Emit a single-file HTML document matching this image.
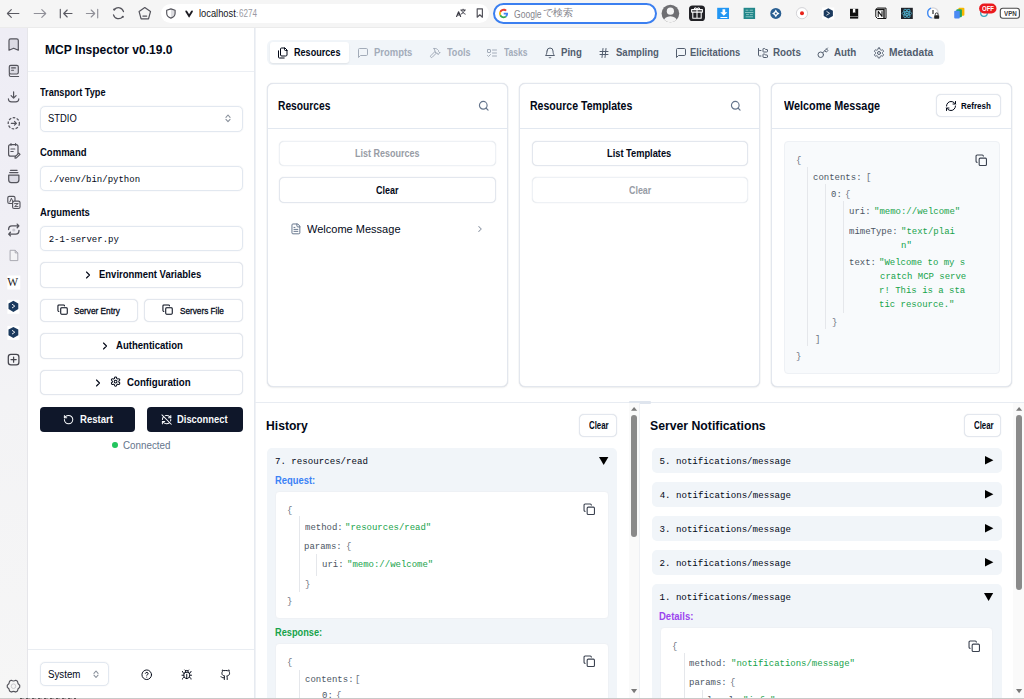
<!DOCTYPE html>
<html><head><meta charset="utf-8"><style>
html,body{margin:0;padding:0;}
body{width:1024px;height:699px;position:relative;overflow:hidden;background:#fff;font-family:"Liberation Sans", sans-serif;color:#020817;}
.r{position:absolute;}
.t{position:absolute;white-space:pre;transform-origin:0 0;}
.s{font-family:"Liberation Sans", sans-serif;}
.m{font-family:"Liberation Mono", monospace;}
.ic{position:absolute;overflow:visible;}
.bl{display:inline-block;width:0;height:0;}
</style></head><body>
<div class="r" style="left:0.00px;top:0.00px;width:1024.00px;height:27.00px;background:#f5f5f5;"></div>
<div class="r" style="left:0.00px;top:27.00px;width:1024.00px;height:1.00px;background:#ebebeb;"></div>
<div class="r" style="left:0.00px;top:28.00px;width:27.00px;height:671.00px;background:linear-gradient(#eeedf5,#f0eff5 30%,#f3f3f5 55%,#f6f6f6);"></div>
<div class="r" style="left:27.00px;top:28.00px;width:1.00px;height:671.00px;background:#e6e6ea;"></div>
<div class="r" style="left:161.20px;top:3.90px;width:328.10px;height:19.10px;background:#fff;border-radius:9.5px;"></div>
<div class="r" style="left:493.20px;top:2.90px;width:164.00px;height:21.00px;border:2px solid #3b7ff0;border-radius:10.5px;box-sizing:border-box;background:#fff;"></div>
<svg class="ic" style="left:0;top:0;width:1024px;height:27px" viewBox="0 0 1024 27"><path d="M18.9 13.5H7.4M11.3 9.6 7.4 13.5l3.9 3.9" stroke="#5a5a62" stroke-width="1.15" fill="none" stroke-linecap="round" stroke-linejoin="round"/><path d="M34.2 13.5H45.7M41.8 9.6l3.9 3.9-3.9 3.9" stroke="#909098" stroke-width="1.15" fill="none" stroke-linecap="round" stroke-linejoin="round"/><path d="M60.3 9.2V17.8M72 13.5H63.7M67.2 10 63.7 13.5l3.5 3.5" stroke="#5a5a62" stroke-width="1.15" fill="none" stroke-linecap="round" stroke-linejoin="round"/><path d="M86.4 13.5H94.7M91.2 10l3.5 3.5-3.5 3.5M97.7 9.2V17.8" stroke="#909098" stroke-width="1.15" fill="none" stroke-linecap="round" stroke-linejoin="round"/><path d="M114.4 9.5A5.3 5.3 0 0 1 123.5 11.6M122.6 16.9A5.3 5.3 0 0 1 113.5 14.8" stroke="#54545c" stroke-width="1.25" fill="none" stroke-linecap="round" stroke-linejoin="round"/><circle cx="114.2" cy="9.6" r="1.1" fill="#54545c"/><circle cx="122.8" cy="16.8" r="1.1" fill="#54545c"/><path d="M144.8 7.6 150.5 11.6 148.5 18.9H141.1L139.1 11.6Z" stroke="#54545c" stroke-width="1.2" fill="none" stroke-linecap="round" stroke-linejoin="round"/><path d="M142.9 16.1H146.7" stroke="#54545c" stroke-width="1.2" fill="none" stroke-linecap="round" stroke-linejoin="round"/><path d="M170.9 8.9 175.1 10.2V13.2C175.1 15.6 173.4 17.3 170.9 18.1Z" fill="#dcdce0"/><path d="M170.9 8.9 175.1 10.2V13.2C175.1 15.6 173.4 17.3 170.9 18.1 168.4 17.3 166.7 15.6 166.7 13.2V10.2Z" stroke="#54545c" stroke-width="1.15" fill="none" stroke-linecap="round" stroke-linejoin="round"/><path d="M186.3 11.4 189.1 15.9 191.9 11.4" stroke="#1c1b22" stroke-width="1.9" fill="none" stroke-linecap="round" stroke-linejoin="miter"/><path d="M456.6 16.5 458.6 11.8 460.6 16.5M457.3 15H460" stroke="#3a3a44" stroke-width="1.15" fill="none" stroke-linecap="round" stroke-linejoin="round"/><path d="M460.8 10H465.4M463.1 9.2V10M461.6 10.4C462.4 12.3 463.6 13.4 465.2 14.1M464.6 10.4C463.8 12.3 462.6 13.4 461 14.1" stroke="#3a3a44" stroke-width="0.95" fill="none" stroke-linecap="round" stroke-linejoin="round"/><path d="M477.2 8.8H482.4V17.2L479.8 14.8 477.2 17.2Z" stroke="#54545c" stroke-width="1.2" fill="none" stroke-linecap="round" stroke-linejoin="round"/><g transform="translate(499,8.8) scale(0.196)"><path fill="#EA4335" d="M24 9.5c3.5 0 6.6 1.2 9.1 3.6l6.8-6.8C35.8 2.4 30.3 0 24 0 14.6 0 6.6 5.4 2.6 13.2l7.9 6.2C12.4 13.6 17.7 9.5 24 9.5z"/><path fill="#4285F4" d="M46.1 24.5c0-1.6-.1-3.1-.4-4.5H24v9h12.4c-.5 2.9-2.2 5.3-4.6 6.9l7.4 5.7c4.3-4 6.9-9.9 6.9-17.1z"/><path fill="#FBBC05" d="M10.5 28.6c-.5-1.4-.8-3-.8-4.6s.3-3.2.8-4.6l-7.9-6.2C.9 16.5 0 20.1 0 24s.9 7.5 2.6 10.8l7.9-6.2z"/><path fill="#34A853" d="M24 48c6.5 0 11.9-2.1 15.9-5.8l-7.4-5.7c-2.1 1.4-4.8 2.3-8.5 2.3-6.3 0-11.6-4.1-13.5-9.8l-7.9 6.2C6.6 42.6 14.6 48 24 48z"/></g><defs><clipPath id="av"><circle cx="670.4" cy="13.5" r="8.8"/></clipPath></defs><circle cx="670.4" cy="13.5" r="8.8" fill="#6f6f72"/><g clip-path="url(#av)"><circle cx="670.4" cy="11.2" r="3.6" fill="#f4f4f4"/><ellipse cx="670.4" cy="21.5" rx="6.8" ry="5.2" fill="#f4f4f4"/></g><rect x="689" y="5.4" width="16" height="15.6" rx="3.6" fill="#222226"/><path d="M691.6 9.6H702.4V12.1H691.6ZM692.8 12.1V18.3H701.2V12.1M697 9.6V18.3M697 9.4C695.8 7.2 693.9 7.6 694.6 9.4M697 9.4C698.2 7.2 700.1 7.6 699.4 9.4" stroke="#ffffff" stroke-width="1.05" fill="none" stroke-linecap="round" stroke-linejoin="round"/><rect x="717.2" y="7.8" width="11.8" height="11.2" fill="#2196f3"/><path d="M722.5 9.3H725.2V12.3H727.4L723.85 15.8 720.3 12.3H722.5Z" fill="#fff"/><rect x="720.4" y="17" width="6.9" height="1" fill="#fff"/><rect x="743.6" y="7.8" width="11.5" height="11.2" fill="#22878a"/><path d="M746 10.2h2M750 10.2h2.5M745.5 12.5h7.5M746.5 14.6h2M750.2 14.6h2.2M746 16.8h6.6" stroke="#9ed2cf" stroke-width="0.8" fill="none" stroke-linecap="round" stroke-linejoin="round"/><circle cx="775.8" cy="13.4" r="5.5" fill="#2a5f92"/><path d="M775.8 9.6 777.3 11.9 779.6 13.4 777.3 14.9 775.8 17.2 774.3 14.9 772 13.4 774.3 11.9Z" fill="#fff"/><circle cx="775.8" cy="13.4" r="1" fill="#2a5f92"/><circle cx="802" cy="13.2" r="5.6" fill="#fff" stroke="#c9c9ce" stroke-width="0.8"/><circle cx="802" cy="13.2" r="2" fill="#e8231b"/><rect x="822" y="7.5" width="12.2" height="12" fill="#fff"/><path d="M828.3 8.3 832.9 10.8V15.9L828.3 18.5 823.7 15.9V10.8Z" fill="#1b3a5e"/><path d="M826.8 11.5 829.6 13.3 826.8 15.1" stroke="#fff" stroke-width="0.8" fill="none" stroke-linecap="round" stroke-linejoin="round"/><path d="M850 8.8H858.2V18.6H850Z" fill="#111"/><path d="M852.9 8.8H855.3V13.1L854.1 12.2 852.9 13.1Z" fill="#fff"/><rect x="850" y="16.1" width="8.2" height="0.8" fill="#9a9a9a"/><path d="M875.8 9.5 877.6 8 886 8.1V18.5H877.5L875.8 16.8Z" fill="#fff" stroke="#111" stroke-width="1"/><path d="M875.8 9.5H884V18.4" stroke="#111" stroke-width="1.4" fill="none"/><path d="M878.2 16.4V11.4L882 16.4V11.4" stroke="#111" stroke-width="1.05" fill="none" stroke-linecap="round" stroke-linejoin="round"/><rect x="901" y="7.8" width="11.8" height="11.2" fill="#20232a"/><g transform="translate(906.9,13.4)" fill="none" stroke="#56c8e8" stroke-width="0.7"><ellipse rx="4.8" ry="1.9"/><ellipse rx="4.8" ry="1.9" transform="rotate(60)"/><ellipse rx="4.8" ry="1.9" transform="rotate(120)"/></g><circle cx="906.9" cy="13.4" r="0.9" fill="#56c8e8"/><circle cx="933" cy="13" r="5.2" fill="#fff" stroke="#d4d4d8" stroke-width="1.3"/><path d="M931 8.2A5 5 0 0 0 931.6 17.8" stroke="#3d8af7" stroke-width="1.3" fill="none"/><rect x="932.4" y="10" width="1.2" height="4" fill="#333"/><rect x="934.2" y="15.2" width="5" height="3.5" rx="0.6" fill="#222"/><path d="M935.3 15.3V14.3A1.4 1.4 0 0 1 938.1 14.3V15.3" stroke="#222" stroke-width="0.9" fill="none"/><rect x="958.4" y="7.8" width="6" height="7.9" rx="1" fill="#f6b800"/><rect x="956.3" y="9.3" width="5.6" height="7.9" rx="1" fill="#1ea362"/><rect x="954.2" y="10.7" width="5.6" height="7.9" rx="1" fill="#4a8af4"/><circle cx="984" cy="13" r="3.3" fill="none" stroke="#3aa6bd" stroke-width="1.3"/><rect x="979.1" y="3.5" width="17.4" height="10" rx="5" fill="#ea1a1f"/><rect x="1000.3" y="8.3" width="19.1" height="10" rx="2.5" fill="#fff" stroke="#4a4a4a" stroke-width="1.1"/></svg>
<div class="t s" style="left:198.60px;top:8.90px;font-size:10.27px;line-height:10.27px;color:#15141a;transform:scaleX(0.9063);">localhost</div>
<div class="t s" style="left:235.82px;top:8.90px;font-size:9.9px;line-height:9.9px;color:#9a9aa2;">:</div>
<div class="t s" style="left:238.50px;top:8.90px;font-size:10.16px;line-height:10.16px;color:#9a9aa2;transform:scaleX(0.7962);">6274</div>
<div class="t s" style="left:513.52px;top:8.51px;font-size:10.58px;line-height:10.58px;color:#84848c;transform:scaleX(0.8094);">Google</div>
<div class="t" style="left:543px;top:8.2px;font-size:9.6px;line-height:10px;color:#84848c;">で検索</div>
<div class="t s" style="left:981.84px;top:5.11px;font-size:7.97px;line-height:7.97px;font-weight:700;color:#ffffff;transform:scaleX(0.7528);">OFF</div>
<div class="t s" style="left:1003.68px;top:9.81px;font-size:7.02px;line-height:7.02px;font-weight:700;color:#3a3a3a;transform:scaleX(0.8838);">VPN</div>
<svg class="ic" style="left:0;top:0;width:28px;height:699px" viewBox="0 0 28 699"><path d="M9 40.5C9 39.5 9.8 38.8 10.7 38.8H16.6C17.5 38.8 18.3 39.5 18.3 40.5V50.2L13.65 48.3 9 50.2Z" fill="#dcdbe4" stroke="#54545c" stroke-width="1.2" fill="none" stroke-linecap="round" stroke-linejoin="round"/><rect x="9.3" y="65.4" width="9" height="8.6" rx="1.4" fill="#dcdbe4" stroke="#54545c" stroke-width="1.15"/><path d="M9.3 73.6V75.1C9.3 75.9 9.9 76.5 10.7 76.5H18.6M11.6 67.9H15.4M11.6 70.2H13.5" stroke="#54545c" stroke-width="1.1" fill="none" stroke-linecap="round" stroke-linejoin="round"/><path d="M13.6 91.8V98.1M11.1 95.7 13.6 98.2 16.1 95.7M8.4 98.8C8.4 100.6 9.8 101.9 11.6 101.9H15.6C17.4 101.9 18.8 100.6 18.8 98.8" stroke="#54545c" stroke-width="1.2" fill="none" stroke-linecap="round" stroke-linejoin="round"/><circle cx="13.8" cy="123.3" r="5.6" stroke="#54545c" stroke-width="1.25" stroke-dasharray="2.6 1.5" fill="none"/><path d="M11.3 123.3H16.3M14.5 121.4 16.4 123.3 14.5 125.2" stroke="#54545c" stroke-width="1.2" fill="none" stroke-linecap="round" stroke-linejoin="round"/><rect x="8.6" y="144.6" width="9.4" height="11.6" rx="2" stroke="#54545c" stroke-width="1.2" fill="none"/><path d="M11 143.5V145.3M15.6 143.5V145.3M10.9 149H14.8M10.9 151.5H13.2M15.2 156.7 18.8 153.1 20 154.3 16.4 157.9 15 158.1Z" stroke="#54545c" stroke-width="1.15" fill="#f0eff5" stroke-linecap="round" stroke-linejoin="round"/><path d="M9.7 172.5H17.9M8.7 175.2H18.9V180.1C18.9 181.5 17.8 182.6 16.4 182.6H11.2C9.8 182.6 8.7 181.5 8.7 180.1Z" fill="#dcdbe4" stroke="#54545c" stroke-width="1.25" fill="none" stroke-linecap="round" stroke-linejoin="round"/><path d="M10.5 170.3H17.1" stroke="#54545c" stroke-width="1.2" fill="none" stroke-linecap="round" stroke-linejoin="round"/><rect x="7.8" y="196.3" width="7.2" height="7.2" rx="1.5" stroke="#54545c" stroke-width="1.15" fill="none"/><rect x="12.6" y="201.1" width="7.4" height="7.4" rx="1.5" stroke="#54545c" stroke-width="1.15" fill="#f0eff5"/><path d="M9.8 202 11.4 198.2 13 202M14.6 203.6H18M18 203.6 14.6 206.6H18" stroke="#54545c" stroke-width="1" fill="none" stroke-linecap="round" stroke-linejoin="round"/><path d="M8.6 229.5C8.6 227.4 10 225.9 12 225.9H18.8M17.2 224.1 18.9 225.9 17.2 227.7M19 230.5C19 232.6 17.6 234.1 15.6 234.1H8.8M10.4 235.9 8.7 234.1 10.4 232.3" stroke="#54545c" stroke-width="1.35" fill="none" stroke-linecap="round" stroke-linejoin="round"/><circle cx="13.8" cy="230" r="1.6" fill="#c9c8d0"/><rect x="7.3" y="275.5" width="13" height="14" fill="#fff"/><rect x="7.4" y="299.8" width="12" height="14" fill="#fff"/><rect x="7.4" y="325.9" width="12" height="14" fill="#fff"/><path d="M10.1 250.3H15.2L17.8 252.9V260.6H10.1Z" fill="#f4f4f6" stroke="#a2a2aa" stroke-width="0.9" stroke-linejoin="round"/><path d="M15.2 250.3V252.9H17.8" stroke="#a2a2aa" stroke-width="0.9" fill="none"/><path d="M8.5 303.5 13.4 300.8 18.3 303.5V309.1L13.4 311.9 8.5 309.1Z" fill="#1b3a5e"/><path d="M12 304.2 14.8 306.1 12 308" stroke="#fff" stroke-width="0.9" fill="none"/><path d="M8.5 329.6 13.4 326.9 18.3 329.6V335.2L13.4 338 8.5 335.2Z" fill="#1b3a5e"/><path d="M12 330.3 14.8 332.2 12 334.1" stroke="#fff" stroke-width="0.9" fill="none"/><rect x="8.3" y="354.3" width="10.6" height="10.6" rx="2.6" stroke="#45454d" stroke-width="1.25" fill="none"/><path d="M13.6 357V362.2M11 359.6H16.2" stroke="#45454d" stroke-width="1.25" fill="none" stroke-linecap="round" stroke-linejoin="round"/><path d="M19.72 685.21L19.72 687.19Q17.48 688.50 17.46 691.10L15.76 692.08Q13.50 690.80 11.24 692.08L9.54 691.10Q9.52 688.50 7.28 687.19L7.28 685.21Q9.52 683.90 9.54 681.30L11.24 680.32Q13.50 681.60 15.76 680.32L17.46 681.30Q17.48 683.90 19.72 685.21Z" stroke="#54545c" stroke-width="1.15" fill="none" stroke-linejoin="round"/><circle cx="13.5" cy="686.2" r="2.3" stroke="#c4c4c8" stroke-width="0.9" fill="none"/></svg>
<div class="t" style="left:7.3px;top:275.5px;font-size:11.5px;line-height:12px;color:#222;font-family:'Liberation Serif', serif;">W</div>
<div class="r" style="left:28.00px;top:28.00px;width:226.00px;height:670.00px;background:#fff;"></div>
<div class="r" style="left:254.00px;top:28.00px;width:1.00px;height:670.00px;background:#e6eaf0;"></div>
<div class="r" style="left:255.00px;top:28.00px;width:1.00px;height:670.00px;background:#f0f2f6;"></div>
<div class="r" style="left:28.00px;top:71.00px;width:226.00px;height:1.00px;background:#eceff4;"></div>
<div class="t s" style="left:45.40px;top:43.41px;font-size:13.48px;line-height:13.48px;font-weight:700;transform:scaleX(0.8934);">MCP Inspector v0.19.0</div>
<div class="t s" style="left:40.48px;top:87.80px;font-size:10.46px;line-height:10.46px;font-weight:700;transform:scaleX(0.8765);">Transport Type</div>
<div class="r" style="left:40.00px;top:106.00px;width:203.00px;height:25.50px;border:1px solid #e2e8f0;border-radius:5px;box-sizing:border-box;box-shadow:0 0 1px rgba(100,116,139,.25);"></div>
<div class="t s" style="left:47.64px;top:112.91px;font-size:10.82px;line-height:10.82px;transform:scaleX(0.8695);">STDIO</div>
<svg class="ic" style="left:223.60px;top:112.10px;width:8px;height:12.60px" viewBox="0 0 8 12.60"><path d="M1.95 5.30L4.00 3.00L6.05 5.30M1.95 7.30L4.00 9.60L6.05 7.30" fill="none" stroke="#8a919c" stroke-width="1.1" stroke-linecap="round" stroke-linejoin="round"/></svg>
<div class="t s" style="left:39.84px;top:147.71px;font-size:10.49px;line-height:10.49px;font-weight:700;transform:scaleX(0.9079);">Command</div>
<div class="r" style="left:40.00px;top:165.50px;width:203.00px;height:25.00px;border:1px solid #e2e8f0;border-radius:5px;box-sizing:border-box;box-shadow:0 0 1px rgba(100,116,139,.25);"></div>
<div class="t m" style="left:48.24px;top:176.21px;font-size:9.0px;line-height:9.0px;">./venv/bin/python</div>
<div class="t s" style="left:39.84px;top:207.50px;font-size:10.48px;line-height:10.48px;font-weight:700;transform:scaleX(0.9022);">Arguments</div>
<div class="r" style="left:40.00px;top:225.50px;width:203.00px;height:25.00px;border:1px solid #e2e8f0;border-radius:5px;box-sizing:border-box;box-shadow:0 0 1px rgba(100,116,139,.25);"></div>
<div class="t m" style="left:48.67px;top:235.60px;font-size:9.0px;line-height:9.0px;">2-1-server.py</div>
<div class="r" style="left:40.00px;top:262.00px;width:203.00px;height:25.50px;border:1px solid #e3e7ee;border-radius:5px;box-sizing:border-box;background:#fff;box-shadow:0 0 1px rgba(100,116,139,.3);"></div>
<svg class="ic" style="left:82.20px;top:268.90px;width:12px;height:12px;" viewBox="0 0 24 24" fill="none" stroke="#020817" stroke-width="2.2" stroke-linecap="round" stroke-linejoin="round"><path d="m9 18 6-6-6-6"/></svg>
<div class="t s" style="left:98.60px;top:270.21px;font-size:10.48px;line-height:10.48px;font-weight:700;transform:scaleX(0.9056);">Environment Variables</div>
<div class="r" style="left:40.00px;top:299.30px;width:98.00px;height:22.50px;border:1px solid #e3e7ee;border-radius:5px;box-sizing:border-box;background:#fff;box-shadow:0 0 1px rgba(100,116,139,.3);"></div>
<svg class="ic" style="left:56.90px;top:304.10px;width:11.2px;height:11.2px;" viewBox="0 0 24 24" fill="none" stroke="#020817" stroke-width="2.2" stroke-linecap="round" stroke-linejoin="round"><rect width="14" height="14" x="8" y="8" rx="2" ry="2"/><path d="M4 16c-1.1 0-2-.9-2-2V4c0-1.1.9-2 2-2h10c1.1 0 2 .9 2 2"/></svg>
<div class="t s" style="left:74.20px;top:305.71px;font-size:9.43px;line-height:9.43px;transform:scaleX(0.8762);-webkit-text-stroke:0.3px #020817;">Server Entry</div>
<div class="r" style="left:144.00px;top:299.30px;width:99.00px;height:22.50px;border:1px solid #e3e7ee;border-radius:5px;box-sizing:border-box;background:#fff;box-shadow:0 0 1px rgba(100,116,139,.3);"></div>
<svg class="ic" style="left:161.50px;top:304.10px;width:11.2px;height:11.2px;" viewBox="0 0 24 24" fill="none" stroke="#020817" stroke-width="2.2" stroke-linecap="round" stroke-linejoin="round"><rect width="14" height="14" x="8" y="8" rx="2" ry="2"/><path d="M4 16c-1.1 0-2-.9-2-2V4c0-1.1.9-2 2-2h10c1.1 0 2 .9 2 2"/></svg>
<div class="t s" style="left:180.16px;top:305.71px;font-size:9.41px;line-height:9.41px;transform:scaleX(0.8725);-webkit-text-stroke:0.3px #020817;">Servers File</div>
<div class="r" style="left:40.00px;top:333.00px;width:203.00px;height:25.70px;border:1px solid #e3e7ee;border-radius:5px;box-sizing:border-box;background:#fff;box-shadow:0 0 1px rgba(100,116,139,.3);"></div>
<svg class="ic" style="left:98.80px;top:339.50px;width:12px;height:12px;" viewBox="0 0 24 24" fill="none" stroke="#020817" stroke-width="2.2" stroke-linecap="round" stroke-linejoin="round"><path d="m9 18 6-6-6-6"/></svg>
<div class="t s" style="left:116.20px;top:341.10px;font-size:10.49px;line-height:10.49px;font-weight:700;transform:scaleX(0.9111);">Authentication</div>
<div class="r" style="left:40.00px;top:370.00px;width:203.00px;height:25.00px;border:1px solid #e3e7ee;border-radius:5px;box-sizing:border-box;background:#fff;box-shadow:0 0 1px rgba(100,116,139,.3);"></div>
<svg class="ic" style="left:92.40px;top:376.70px;width:12px;height:12px;" viewBox="0 0 24 24" fill="none" stroke="#020817" stroke-width="2.2" stroke-linecap="round" stroke-linejoin="round"><path d="m9 18 6-6-6-6"/></svg>
<svg class="ic" style="left:110.00px;top:376.00px;width:11.2px;height:11.2px;" viewBox="0 0 24 24" fill="none" stroke="#020817" stroke-width="2.2" stroke-linecap="round" stroke-linejoin="round"><path d="M12.22 2h-.44a2 2 0 0 0-2 2v.18a2 2 0 0 1-1 1.73l-.43.25a2 2 0 0 1-2 0l-.15-.08a2 2 0 0 0-2.73.73l-.22.38a2 2 0 0 0 .73 2.73l.15.1a2 2 0 0 1 1 1.72v.51a2 2 0 0 1-1 1.74l-.15.09a2 2 0 0 0-.73 2.73l.22.38a2 2 0 0 0 2.73.73l.15-.08a2 2 0 0 1 2 0l.43.25a2 2 0 0 1 1 1.73V20a2 2 0 0 0 2 2h.44a2 2 0 0 0 2-2v-.18a2 2 0 0 1 1-1.73l.43-.25a2 2 0 0 1 2 0l.15.08a2 2 0 0 0 2.73-.73l.22-.39a2 2 0 0 0-.73-2.73l-.15-.08a2 2 0 0 1-1-1.74v-.5a2 2 0 0 1 1-1.74l.15-.09a2 2 0 0 0 .73-2.73l-.22-.38a2 2 0 0 0-2.73-.73l-.15.08a2 2 0 0 1-2 0l-.43-.25a2 2 0 0 1-1-1.73V4a2 2 0 0 0-2-2z"/><circle cx="12" cy="12" r="3"/></svg>
<div class="t s" style="left:126.68px;top:377.30px;font-size:10.5px;line-height:10.5px;font-weight:700;transform:scaleX(0.9235);">Configuration</div>
<div class="r" style="left:40.00px;top:406.80px;width:95.40px;height:25.00px;background:#0f172a;border-radius:4px;"></div>
<svg class="ic" style="left:63.00px;top:413.50px;width:11.2px;height:11.2px;" viewBox="0 0 24 24" fill="none" stroke="#f8fafc" stroke-width="2.2" stroke-linecap="round" stroke-linejoin="round"><path d="M3 12a9 9 0 1 0 9-9 9.75 9.75 0 0 0-6.74 2.74L3 8"/><path d="M3 3v5h5"/></svg>
<div class="t s" style="left:79.76px;top:414.50px;font-size:10.46px;line-height:10.46px;font-weight:700;color:#f8fafc;transform:scaleX(0.9127);">Restart</div>
<div class="r" style="left:147.00px;top:406.80px;width:95.60px;height:25.00px;background:#0f172a;border-radius:4px;"></div>
<svg class="ic" style="left:161.00px;top:413.50px;width:11.2px;height:11.2px;" viewBox="0 0 24 24" fill="none" stroke="#f8fafc" stroke-width="2.2" stroke-linecap="round" stroke-linejoin="round"><path d="M21 8L18.74 5.74A9.75 9.75 0 0 0 12 3C11 3 10.030 3.160 9.130 3.470"/><path d="M8 16H3v5"/><path d="M3 12C3 9.510 4 7.260 5.640 5.640"/><path d="m3 16 2.260 2.260A9.750 9.750 0 0 0 12 21c2.490 0 4.740-1 6.360-2.640"/><path d="M21 12c0 1-.160 1.970-.470 2.870"/><path d="M21 3v5h-5"/><path d="M22 22 2 2"/></svg>
<div class="t s" style="left:177.48px;top:414.50px;font-size:10.46px;line-height:10.46px;font-weight:700;color:#f8fafc;transform:scaleX(0.8981);">Disconnect</div>
<div class="r" style="left:112.20px;top:441.80px;width:5.80px;height:5.80px;background:#22c55e;border-radius:50%;"></div>
<div class="t s" style="left:123.00px;top:439.81px;font-size:10.52px;line-height:10.52px;color:#64748b;transform:scaleX(0.9338);">Connected</div>
<div class="r" style="left:28.00px;top:649.00px;width:226.00px;height:1.00px;background:#e9edf2;"></div>
<div class="r" style="left:40.20px;top:661.50px;width:68.60px;height:24.70px;border:1px solid #e2e8f0;border-radius:5px;box-sizing:border-box;box-shadow:0 0 1px rgba(100,116,139,.25);"></div>
<div class="t s" style="left:47.96px;top:670.01px;font-size:10.47px;line-height:10.47px;transform:scaleX(0.9297);">System</div>
<svg class="ic" style="left:91.90px;top:667.90px;width:8px;height:12.50px" viewBox="0 0 8 12.50"><path d="M1.95 5.30L4.00 3.00L6.05 5.30M1.95 7.20L4.00 9.50L6.05 7.20" fill="none" stroke="#8a919c" stroke-width="1.1" stroke-linecap="round" stroke-linejoin="round"/></svg>
<svg class="ic" style="left:140.50px;top:668.50px;width:11.5px;height:11.5px;" viewBox="0 0 24 24" fill="none" stroke="#020817" stroke-width="2" stroke-linecap="round" stroke-linejoin="round"><circle cx="12" cy="12" r="10"/><path d="M9.09 9a3 3 0 0 1 5.83 1c0 2-3 3-3 3"/><path d="M12 17h.01"/></svg>
<svg class="ic" style="left:180.50px;top:668.50px;width:11.5px;height:11.5px;" viewBox="0 0 24 24" fill="none" stroke="#020817" stroke-width="2" stroke-linecap="round" stroke-linejoin="round"><path d="m8 2 1.88 1.88"/><path d="M14.12 3.88 16 2"/><path d="M9 7.13v-1a3.003 3.003 0 1 1 6 0v1"/><path d="M12 20c-3.3 0-6-2.7-6-6v-3a4 4 0 0 1 4-4h4a4 4 0 0 1 4 4v3c0 3.3-2.7 6-6 6"/><path d="M12 20v-9"/><path d="M6.53 9C4.6 8.8 3 7.1 3 5"/><path d="M6 13H2"/><path d="M3 21c0-2.1 1.7-3.9 3.8-4"/><path d="M20.97 5c0 2.1-1.6 3.8-3.5 4"/><path d="M22 13h-4"/><path d="M17.2 17c2.1.1 3.8 1.9 3.8 4"/></svg>
<svg class="ic" style="left:219.50px;top:668.50px;width:11.5px;height:11.5px;" viewBox="0 0 24 24" fill="none" stroke="#020817" stroke-width="2" stroke-linecap="round" stroke-linejoin="round"><path d="M15 22v-4a4.8 4.8 0 0 0-1-3.5c3 0 6-2 6-5.5.08-1.25-.27-2.48-1-3.5.28-1.15.28-2.35 0-3.5 0 0-1 0-3 1.5-2.64-.5-5.36-.5-8 0C6 2 5 2 5 2c-.3 1.15-.3 2.35 0 3.5A5.403 5.403 0 0 0 4 9c0 3.5 3 5.5 6 5.5-.39.49-.68 1.05-.85 1.65-.17.6-.22 1.23-.15 1.85v4"/><path d="M9 18c-4.49 2-5-2-7-2"/></svg>
<div class="r" style="left:267.00px;top:39.60px;width:678.00px;height:25.80px;background:#f1f5f9;border-radius:6px;"></div>
<div class="r" style="left:269.60px;top:41.80px;width:79.00px;height:21.00px;background:#fff;border-radius:3px;box-shadow:0 1px 2px rgba(0,0,0,.08);"></div>
<svg class="ic" style="left:276.50px;top:46.50px;width:12px;height:12px;" viewBox="0 0 24 24" fill="none" stroke="#020817" stroke-width="2" stroke-linecap="round" stroke-linejoin="round"><path d="M20 7h-3a2 2 0 0 1-2-2V2"/><path d="M9 18a2 2 0 0 1-2-2V4a2 2 0 0 1 2-2h7l4 4v10a2 2 0 0 1-2 2Z"/><path d="M3 7.6v12.8A1.6 1.6 0 0 0 4.6 22h9.8"/></svg>
<div class="t s" style="left:294.12px;top:48.22px;font-size:10.08px;line-height:10.08px;font-weight:700;transform:scaleX(0.9008);">Resources</div>
<svg class="ic" style="left:356.50px;top:46.50px;width:12px;height:12px;" viewBox="0 0 24 24" fill="none" stroke="#a3acb9" stroke-width="2" stroke-linecap="round" stroke-linejoin="round"><path d="M21 15a2 2 0 0 1-2 2H7l-4 4V5a2 2 0 0 1 2-2h14a2 2 0 0 1 2 2z"/></svg>
<div class="t s" style="left:373.76px;top:48.22px;font-size:10.08px;line-height:10.08px;font-weight:700;color:#a3acb9;transform:scaleX(0.9376);">Prompts</div>
<svg class="ic" style="left:428.50px;top:46.50px;width:12px;height:12px;" viewBox="0 0 24 24" fill="none" stroke="#a3acb9" stroke-width="2" stroke-linecap="round" stroke-linejoin="round"><path d="m15 12-8.373 8.373a1 1 0 1 1-3-3L12 9"/><path d="m18 15 4-4"/><path d="m21.5 11.5-1.914-1.914A2 2 0 0 1 19 8.172V7l-2.26-2.26a6 6 0 0 0-4.202-1.756L9 2.96l.92.82A6.18 6.18 0 0 1 12 8.4V10l2 2h1.172a2 2 0 0 1 1.414.586L18.5 14.5"/></svg>
<div class="t s" style="left:446.64px;top:48.22px;font-size:10.08px;line-height:10.08px;font-weight:700;color:#a3acb9;transform:scaleX(0.8976);">Tools</div>
<svg class="ic" style="left:486.20px;top:46.50px;width:12px;height:12px;" viewBox="0 0 24 24" fill="none" stroke="#a3acb9" stroke-width="2" stroke-linecap="round" stroke-linejoin="round"><rect x="3" y="5" width="6" height="6" rx="1"/><path d="m3 17 2 2 4-4"/><path d="M13 6h8"/><path d="M13 12h8"/><path d="M13 18h8"/></svg>
<div class="t s" style="left:504.00px;top:48.22px;font-size:10.08px;line-height:10.08px;font-weight:700;color:#a3acb9;transform:scaleX(0.8423);">Tasks</div>
<svg class="ic" style="left:543.80px;top:46.50px;width:12px;height:12px;" viewBox="0 0 24 24" fill="none" stroke="#525d6e" stroke-width="2" stroke-linecap="round" stroke-linejoin="round"><path d="M6 8a6 6 0 0 1 12 0c0 7 3 9 3 9H3s3-2 3-9"/><path d="M10.3 21a1.94 1.94 0 0 0 3.4 0"/></svg>
<div class="t s" style="left:560.60px;top:48.22px;font-size:10.08px;line-height:10.08px;font-weight:700;color:#525d6e;transform:scaleX(0.9542);">Ping</div>
<svg class="ic" style="left:598.30px;top:46.50px;width:12px;height:12px;" viewBox="0 0 24 24" fill="none" stroke="#525d6e" stroke-width="2" stroke-linecap="round" stroke-linejoin="round"><line x1="4" x2="20" y1="9" y2="9"/><line x1="4" x2="20" y1="15" y2="15"/><line x1="10" x2="8" y1="3" y2="21"/><line x1="16" x2="14" y1="3" y2="21"/></svg>
<div class="t s" style="left:615.64px;top:48.22px;font-size:10.08px;line-height:10.08px;font-weight:700;color:#525d6e;transform:scaleX(0.9432);">Sampling</div>
<svg class="ic" style="left:674.60px;top:46.50px;width:12px;height:12px;" viewBox="0 0 24 24" fill="none" stroke="#525d6e" stroke-width="2" stroke-linecap="round" stroke-linejoin="round"><path d="M21 15a2 2 0 0 1-2 2H7l-4 4V5a2 2 0 0 1 2-2h14a2 2 0 0 1 2 2z"/></svg>
<div class="t s" style="left:690.32px;top:48.22px;font-size:10.08px;line-height:10.08px;font-weight:700;color:#525d6e;transform:scaleX(0.9323);">Elicitations</div>
<svg class="ic" style="left:757.30px;top:46.50px;width:12px;height:12px;" viewBox="0 0 24 24" fill="none" stroke="#525d6e" stroke-width="2" stroke-linecap="round" stroke-linejoin="round"><path d="M20 10a1 1 0 0 0 1-1V6a1 1 0 0 0-1-1h-2.5a1 1 0 0 1-.8-.4l-.9-1.2A1 1 0 0 0 15 3h-2a1 1 0 0 0-1 1v5a1 1 0 0 0 1 1Z"/><path d="M20 21a1 1 0 0 0 1-1v-3a1 1 0 0 0-1-1h-2.9a1 1 0 0 1-.88-.55l-.42-.85a1 1 0 0 0-.92-.6H13a1 1 0 0 0-1 1v5a1 1 0 0 0 1 1Z"/><path d="M3 5a2 2 0 0 0 2 2h3"/><path d="M3 3v13a2 2 0 0 0 2 2h3"/></svg>
<div class="t s" style="left:773.44px;top:48.22px;font-size:10.08px;line-height:10.08px;font-weight:700;color:#525d6e;transform:scaleX(0.9760);">Roots</div>
<svg class="ic" style="left:816.60px;top:46.50px;width:12px;height:12px;" viewBox="0 0 24 24" fill="none" stroke="#525d6e" stroke-width="2" stroke-linecap="round" stroke-linejoin="round"><path d="m15.5 7.5 2.3 2.3a1 1 0 0 0 1.4 0l2.1-2.1a1 1 0 0 0 0-1.4L19 4"/><path d="m21 2-9.6 9.6"/><circle cx="7.5" cy="15.5" r="5.5"/></svg>
<div class="t s" style="left:834.20px;top:48.22px;font-size:10.08px;line-height:10.08px;font-weight:700;color:#525d6e;transform:scaleX(0.9744);">Auth</div>
<svg class="ic" style="left:873.00px;top:46.50px;width:12px;height:12px;" viewBox="0 0 24 24" fill="none" stroke="#525d6e" stroke-width="2" stroke-linecap="round" stroke-linejoin="round"><path d="M12.22 2h-.44a2 2 0 0 0-2 2v.18a2 2 0 0 1-1 1.73l-.43.25a2 2 0 0 1-2 0l-.15-.08a2 2 0 0 0-2.73.73l-.22.38a2 2 0 0 0 .73 2.73l.15.1a2 2 0 0 1 1 1.72v.51a2 2 0 0 1-1 1.74l-.15.09a2 2 0 0 0-.73 2.73l.22.38a2 2 0 0 0 2.73.73l.15-.08a2 2 0 0 1 2 0l.43.25a2 2 0 0 1 1 1.73V20a2 2 0 0 0 2 2h.44a2 2 0 0 0 2-2v-.18a2 2 0 0 1 1-1.73l.43-.25a2 2 0 0 1 2 0l.15.08a2 2 0 0 0 2.73-.73l.22-.39a2 2 0 0 0-.73-2.73l-.15-.08a2 2 0 0 1-1-1.74v-.5a2 2 0 0 1 1-1.74l.15-.09a2 2 0 0 0 .73-2.73l-.22-.38a2 2 0 0 0-2.73-.73l-.15.08a2 2 0 0 1-2 0l-.43-.25a2 2 0 0 1-1-1.73V4a2 2 0 0 0-2-2z"/><circle cx="12" cy="12" r="3"/></svg>
<div class="t s" style="left:889.40px;top:48.22px;font-size:10.08px;line-height:10.08px;font-weight:700;color:#525d6e;transform:scaleX(1.0116);">Metadata</div>
<div class="r" style="left:267.00px;top:82.60px;width:241.00px;height:304.00px;border:1px solid #e3e7ee;border-radius:6px;box-sizing:border-box;background:#fff;box-shadow:0 0 1px rgba(100,116,139,.35),0 1px 2px rgba(0,0,0,.05);"></div>
<div class="r" style="left:268.00px;top:128.30px;width:239.00px;height:1.00px;background:#e2e8f0;"></div>
<div class="r" style="left:519.00px;top:82.60px;width:241.00px;height:304.00px;border:1px solid #e3e7ee;border-radius:6px;box-sizing:border-box;background:#fff;box-shadow:0 0 1px rgba(100,116,139,.35),0 1px 2px rgba(0,0,0,.05);"></div>
<div class="r" style="left:520.00px;top:128.30px;width:239.00px;height:1.00px;background:#e2e8f0;"></div>
<div class="r" style="left:771.00px;top:82.60px;width:241.00px;height:304.00px;border:1px solid #e3e7ee;border-radius:6px;box-sizing:border-box;background:#fff;box-shadow:0 0 1px rgba(100,116,139,.35),0 1px 2px rgba(0,0,0,.05);"></div>
<div class="r" style="left:772.00px;top:128.30px;width:239.00px;height:1.00px;background:#e2e8f0;"></div>
<div class="t s" style="left:278.28px;top:100.11px;font-size:12.05px;line-height:12.05px;font-weight:700;transform:scaleX(0.8508);">Resources</div>
<svg class="ic" style="left:478.30px;top:100.20px;width:11.5px;height:11.5px;" viewBox="0 0 24 24" fill="none" stroke="#64748b" stroke-width="2.4" stroke-linecap="round" stroke-linejoin="round"><circle cx="11" cy="11" r="8"/><path d="m21 21-4.3-4.3"/></svg>
<div class="r" style="left:279.30px;top:140.50px;width:217.00px;height:25.00px;border:1px solid #e3e7ee;border-radius:5px;box-sizing:border-box;background:#fff;box-shadow:0 0 1px rgba(100,116,139,.3);border-color:#eef1f5;"></div>
<div class="t s" style="left:355.40px;top:147.91px;font-size:10.71px;line-height:10.71px;font-weight:700;color:#979ca5;transform:scaleX(0.8390);">List Resources</div>
<div class="r" style="left:279.30px;top:177.30px;width:217.00px;height:25.50px;border:1px solid #e3e7ee;border-radius:5px;box-sizing:border-box;background:#fff;box-shadow:0 0 1px rgba(100,116,139,.3);"></div>
<div class="t s" style="left:376.32px;top:184.81px;font-size:10.73px;line-height:10.73px;font-weight:700;transform:scaleX(0.8376);">Clear</div>
<svg class="ic" style="left:289.90px;top:222.50px;width:11.8px;height:11.8px;" viewBox="0 0 24 24" fill="none" stroke="#64748b" stroke-width="2" stroke-linecap="round" stroke-linejoin="round"><path d="M15 2H6a2 2 0 0 0-2 2v16a2 2 0 0 0 2 2h12a2 2 0 0 0 2-2V7Z"/><path d="M14 2v4a2 2 0 0 0 2 2h4"/><path d="M10 9H8"/><path d="M16 13H8"/><path d="M16 17H8"/></svg>
<div class="t s" style="left:307.20px;top:222.81px;font-size:11.77px;line-height:11.77px;transform:scaleX(0.9367);">Welcome Message</div>
<svg class="ic" style="left:474.50px;top:223.50px;width:10px;height:10px;" viewBox="0 0 24 24" fill="none" stroke="#8a94a3" stroke-width="2.5" stroke-linecap="round" stroke-linejoin="round"><path d="m9 18 6-6-6-6"/></svg>
<div class="t s" style="left:530.48px;top:100.01px;font-size:12.1px;line-height:12.1px;font-weight:700;transform:scaleX(0.8718);">Resource Templates</div>
<svg class="ic" style="left:730.30px;top:100.20px;width:11.5px;height:11.5px;" viewBox="0 0 24 24" fill="none" stroke="#64748b" stroke-width="2.4" stroke-linecap="round" stroke-linejoin="round"><circle cx="11" cy="11" r="8"/><path d="m21 21-4.3-4.3"/></svg>
<div class="r" style="left:531.70px;top:140.50px;width:216.30px;height:25.00px;border:1px solid #e3e7ee;border-radius:5px;box-sizing:border-box;background:#fff;box-shadow:0 0 1px rgba(100,116,139,.3);"></div>
<div class="t s" style="left:607.44px;top:147.81px;font-size:10.74px;line-height:10.74px;font-weight:700;transform:scaleX(0.8636);">List Templates</div>
<div class="r" style="left:531.70px;top:177.30px;width:216.30px;height:25.50px;border:1px solid #e3e7ee;border-radius:5px;box-sizing:border-box;background:#fff;box-shadow:0 0 1px rgba(100,116,139,.3);border-color:#eef1f5;"></div>
<div class="t s" style="left:628.84px;top:184.71px;font-size:10.71px;line-height:10.71px;font-weight:700;color:#979ca5;transform:scaleX(0.8300);">Clear</div>
<div class="t s" style="left:784.16px;top:100.01px;font-size:12.13px;line-height:12.13px;font-weight:700;transform:scaleX(0.8923);">Welcome Message</div>
<div class="r" style="left:936.00px;top:94.30px;width:65.00px;height:22.30px;border:1px solid #e3e7ee;border-radius:5px;box-sizing:border-box;background:#fff;box-shadow:0 0 1px rgba(100,116,139,.3);"></div>
<svg class="ic" style="left:944.60px;top:99.50px;width:12px;height:12px;" viewBox="0 0 24 24" fill="none" stroke="#020817" stroke-width="2" stroke-linecap="round" stroke-linejoin="round"><path d="M3 12a9 9 0 0 1 9-9 9.75 9.75 0 0 1 6.74 2.74L21 8"/><path d="M21 3v5h-5"/><path d="M21 12a9 9 0 0 1-9 9 9.75 9.75 0 0 1-6.74-2.74L3 16"/><path d="M8 16H3v5"/></svg>
<div class="t s" style="left:961.48px;top:101.10px;font-size:9.83px;line-height:9.83px;font-weight:700;transform:scaleX(0.8151);">Refresh</div>
<div class="r" style="left:783.60px;top:140.80px;width:216.40px;height:233.00px;background:#f8fafc;border:1px solid #eef1f5;border-radius:4px;box-sizing:border-box;"></div>
<svg class="ic" style="left:975.00px;top:153.50px;width:12.5px;height:12.5px;" viewBox="0 0 24 24" fill="none" stroke="#3b4250" stroke-width="2.1" stroke-linecap="round" stroke-linejoin="round"><rect width="14" height="14" x="8" y="8" rx="2" ry="2"/><path d="M4 16c-1.1 0-2-.9-2-2V4c0-1.1.9-2 2-2h10c1.1 0 2 .9 2 2"/></svg>
<div class="t m" style="left:795.81px;top:155.61px;font-size:9.36px;line-height:9.36px;color:#6b7280;transform:scaleX(0.9615);">{</div>
<div class="t m" style="left:813.22px;top:172.81px;font-size:9.36px;line-height:9.36px;color:#4b5563;transform:scaleX(0.9615);">contents:</div>
<div class="t m" style="left:865.70px;top:172.81px;font-size:9.36px;line-height:9.36px;color:#6b7280;transform:scaleX(0.9615);">[</div>
<div class="t m" style="left:830.66px;top:190.00px;font-size:9.36px;line-height:9.36px;color:#4b5563;transform:scaleX(0.9615);">0:</div>
<div class="t m" style="left:844.91px;top:190.00px;font-size:9.36px;line-height:9.36px;color:#6b7280;transform:scaleX(0.9615);">{</div>
<div class="t m" style="left:849.09px;top:206.81px;font-size:9.36px;line-height:9.36px;color:#4b5563;transform:scaleX(0.9615);">uri:</div>
<div class="t m" style="left:874.39px;top:206.81px;font-size:9.36px;line-height:9.36px;color:#16a34a;transform:scaleX(0.9615);">"memo://welcome"</div>
<div class="t m" style="left:848.75px;top:226.61px;font-size:9.36px;line-height:9.36px;color:#4b5563;transform:scaleX(0.9615);">mimeType:</div>
<div class="t m" style="left:900.59px;top:226.61px;font-size:9.36px;line-height:9.36px;color:#16a34a;transform:scaleX(0.9615);">"text/plai</div>
<div class="t m" style="left:901.04px;top:240.81px;font-size:9.36px;line-height:9.36px;color:#16a34a;transform:scaleX(0.9615);">n"</div>
<div class="t m" style="left:849.09px;top:257.61px;font-size:9.36px;line-height:9.36px;color:#4b5563;transform:scaleX(0.9615);">text:</div>
<div class="t m" style="left:878.89px;top:257.61px;font-size:9.36px;line-height:9.36px;color:#16a34a;transform:scaleX(0.9615);">"Welcome to my s</div>
<div class="t m" style="left:879.52px;top:271.81px;font-size:9.36px;line-height:9.36px;color:#16a34a;transform:scaleX(0.9615);">cratch MCP serve</div>
<div class="t m" style="left:879.02px;top:286.00px;font-size:9.36px;line-height:9.36px;color:#16a34a;transform:scaleX(0.9615);">r! This is a sta</div>
<div class="t m" style="left:879.29px;top:300.22px;font-size:9.36px;line-height:9.36px;color:#16a34a;transform:scaleX(0.9615);">tic resource."</div>
<div class="t m" style="left:832.28px;top:317.71px;font-size:9.36px;line-height:9.36px;color:#6b7280;transform:scaleX(0.9615);">}</div>
<div class="t m" style="left:814.63px;top:334.51px;font-size:9.36px;line-height:9.36px;color:#6b7280;transform:scaleX(0.9615);">]</div>
<div class="t m" style="left:796.08px;top:351.72px;font-size:9.36px;line-height:9.36px;color:#6b7280;transform:scaleX(0.9615);">}</div>
<div class="r" style="left:807.00px;top:167.00px;width:1.00px;height:179.00px;background:#e5e7eb;"></div>
<div class="r" style="left:824.50px;top:184.00px;width:1.00px;height:145.00px;background:#e5e7eb;"></div>
<div class="r" style="left:842.50px;top:201.00px;width:1.00px;height:112.00px;background:#e5e7eb;"></div>
<div class="r" style="left:255.00px;top:402.00px;width:769.00px;height:1.00px;background:#e8ecf2;"></div>
<div class="r" style="left:629.00px;top:401.00px;width:22.00px;height:2.50px;background:#dfe5ee;border-radius:1px;"></div>
<div class="r" style="left:629.00px;top:403.00px;width:10.00px;height:296.00px;background:#fafafa;"></div>
<div class="r" style="left:639.00px;top:403.00px;width:1.00px;height:296.00px;background:#eef0f4;"></div>
<svg class="ic" style="left:631px;top:406.5px;width:6.2px;height:3.8px" viewBox="0 0 7 5" preserveAspectRatio="none"><path d="M3.5 0 7 5H0z" fill="#7a7a7a"/></svg>
<svg class="ic" style="left:631px;top:689.2px;width:6.2px;height:4.2px" viewBox="0 0 7 5" preserveAspectRatio="none"><path d="M3.5 5 7 0H0z" fill="#7a7a7a"/></svg>
<div class="r" style="left:630.80px;top:415.00px;width:6.40px;height:122.00px;background:#8a8a8a;border-radius:3.2px;"></div>
<div class="r" style="left:1013.40px;top:403.00px;width:10.60px;height:296.00px;background:#fafafa;"></div>
<svg class="ic" style="left:1015.7px;top:406.5px;width:6.2px;height:3.8px" viewBox="0 0 7 5" preserveAspectRatio="none"><path d="M3.5 0 7 5H0z" fill="#7a7a7a"/></svg>
<svg class="ic" style="left:1015.7px;top:689.2px;width:6.2px;height:4.2px" viewBox="0 0 7 5" preserveAspectRatio="none"><path d="M3.5 5 7 0H0z" fill="#7a7a7a"/></svg>
<div class="r" style="left:1015.50px;top:415.00px;width:6.40px;height:175.00px;background:#8a8a8a;border-radius:3.2px;"></div>
<div class="t s" style="left:266.12px;top:419.01px;font-size:13.46px;line-height:13.46px;font-weight:700;transform:scaleX(0.9025);">History</div>
<div class="r" style="left:579.40px;top:414.20px;width:37.80px;height:22.60px;border:1px solid #e3e7ee;border-radius:5px;box-sizing:border-box;background:#fff;box-shadow:0 0 1px rgba(100,116,139,.3);"></div>
<div class="t s" style="left:588.52px;top:420.81px;font-size:10.13px;line-height:10.13px;font-weight:700;transform:scaleX(0.7764);">Clear</div>
<div class="r" style="left:267.20px;top:448.00px;width:350.00px;height:262.00px;background:#f1f5f9;border-radius:5px;"></div>
<div class="t m" style="left:274.91px;top:456.61px;font-size:9.15px;line-height:9.15px;">7. resources/read</div>
<svg class="ic" style="left:599.1px;top:456.6px;width:9.4px;height:8px" viewBox="0 0 10 9" preserveAspectRatio="none"><path d="M0 0h10L5 9z" fill="#000"/></svg>
<div class="t s" style="left:274.76px;top:475.81px;font-size:10.25px;line-height:10.25px;font-weight:700;color:#3b82f6;transform:scaleX(0.9170);">Request:</div>
<div class="r" style="left:275.40px;top:491.00px;width:334.00px;height:128.00px;background:#fff;border:1px solid #eef1f5;border-radius:4px;box-sizing:border-box;"></div>
<svg class="ic" style="left:583.00px;top:503.00px;width:12.5px;height:12.5px;" viewBox="0 0 24 24" fill="none" stroke="#3b4250" stroke-width="2.1" stroke-linecap="round" stroke-linejoin="round"><rect width="14" height="14" x="8" y="8" rx="2" ry="2"/><path d="M4 16c-1.1 0-2-.9-2-2V4c0-1.1.9-2 2-2h10c1.1 0 2 .9 2 2"/></svg>
<div class="t m" style="left:287.01px;top:505.81px;font-size:9.36px;line-height:9.36px;color:#6b7280;transform:scaleX(0.9615);">{</div>
<div class="t m" style="left:304.75px;top:522.60px;font-size:9.36px;line-height:9.36px;color:#4b5563;transform:scaleX(0.9615);">method:</div>
<div class="t m" style="left:345.39px;top:522.60px;font-size:9.36px;line-height:9.36px;color:#16a34a;transform:scaleX(0.9615);">"resources/read"</div>
<div class="t m" style="left:304.44px;top:541.81px;font-size:9.36px;line-height:9.36px;color:#4b5563;transform:scaleX(0.9615);">params:</div>
<div class="t m" style="left:345.81px;top:541.81px;font-size:9.36px;line-height:9.36px;color:#6b7280;transform:scaleX(0.9615);">{</div>
<div class="t m" style="left:321.89px;top:559.60px;font-size:9.36px;line-height:9.36px;color:#4b5563;transform:scaleX(0.9615);">uri:</div>
<div class="t m" style="left:346.89px;top:559.60px;font-size:9.36px;line-height:9.36px;color:#16a34a;transform:scaleX(0.9615);">"memo://welcome"</div>
<div class="t m" style="left:304.98px;top:579.51px;font-size:9.36px;line-height:9.36px;color:#6b7280;transform:scaleX(0.9615);">}</div>
<div class="t m" style="left:287.28px;top:596.81px;font-size:9.36px;line-height:9.36px;color:#6b7280;transform:scaleX(0.9615);">}</div>
<div class="r" style="left:299.00px;top:516.40px;width:1.00px;height:76.00px;background:#e5e7eb;"></div>
<div class="r" style="left:316.30px;top:553.50px;width:1.00px;height:22.50px;background:#e5e7eb;"></div>
<div class="t s" style="left:274.76px;top:627.82px;font-size:10.24px;line-height:10.24px;font-weight:700;color:#16a34a;transform:scaleX(0.9012);">Response:</div>
<div class="r" style="left:275.40px;top:643.00px;width:334.00px;height:60.00px;background:#fff;border:1px solid #eef1f5;border-radius:4px;box-sizing:border-box;"></div>
<svg class="ic" style="left:583.00px;top:655.00px;width:12.5px;height:12.5px;" viewBox="0 0 24 24" fill="none" stroke="#3b4250" stroke-width="2.1" stroke-linecap="round" stroke-linejoin="round"><rect width="14" height="14" x="8" y="8" rx="2" ry="2"/><path d="M4 16c-1.1 0-2-.9-2-2V4c0-1.1.9-2 2-2h10c1.1 0 2 .9 2 2"/></svg>
<div class="t m" style="left:287.01px;top:657.81px;font-size:9.36px;line-height:9.36px;color:#6b7280;transform:scaleX(0.9615);">{</div>
<div class="t m" style="left:304.62px;top:674.60px;font-size:9.36px;line-height:9.36px;color:#4b5563;transform:scaleX(0.9615);">contents:</div>
<div class="t m" style="left:355.20px;top:674.60px;font-size:9.36px;line-height:9.36px;color:#6b7280;transform:scaleX(0.9615);">[</div>
<div class="t m" style="left:322.16px;top:691.31px;font-size:9.36px;line-height:9.36px;color:#4b5563;transform:scaleX(0.9615);">0:</div>
<div class="t m" style="left:336.01px;top:691.31px;font-size:9.36px;line-height:9.36px;color:#6b7280;transform:scaleX(0.9615);">{</div>
<div class="r" style="left:299.00px;top:670.00px;width:1.00px;height:30.00px;background:#e5e7eb;"></div>
<div class="t s" style="left:650.48px;top:418.81px;font-size:13.49px;line-height:13.49px;font-weight:700;transform:scaleX(0.9081);">Server Notifications</div>
<div class="r" style="left:964.40px;top:414.20px;width:36.90px;height:22.60px;border:1px solid #e3e7ee;border-radius:5px;box-sizing:border-box;background:#fff;box-shadow:0 0 1px rgba(100,116,139,.3);"></div>
<div class="t s" style="left:973.52px;top:420.81px;font-size:10.13px;line-height:10.13px;font-weight:700;transform:scaleX(0.7764);">Clear</div>
<div class="r" style="left:651.60px;top:448.00px;width:350.20px;height:25.00px;background:#f1f5f9;border-radius:5px;"></div>
<div class="t m" style="left:659.51px;top:456.50px;font-size:9.15px;line-height:9.15px;">5. notifications/message</div>
<svg class="ic" style="left:984.5px;top:456.00px;width:8.4px;height:8.6px" viewBox="0 0 9 10" preserveAspectRatio="none"><path d="M0 0 9 5 0 10z" fill="#000"/></svg>
<div class="r" style="left:651.60px;top:482.00px;width:350.20px;height:25.00px;background:#f1f5f9;border-radius:5px;"></div>
<div class="t m" style="left:659.64px;top:490.50px;font-size:9.15px;line-height:9.15px;">4. notifications/message</div>
<svg class="ic" style="left:984.5px;top:490.00px;width:8.4px;height:8.6px" viewBox="0 0 9 10" preserveAspectRatio="none"><path d="M0 0 9 5 0 10z" fill="#000"/></svg>
<div class="r" style="left:651.60px;top:516.00px;width:350.20px;height:25.00px;background:#f1f5f9;border-radius:5px;"></div>
<div class="t m" style="left:659.51px;top:524.50px;font-size:9.15px;line-height:9.15px;">3. notifications/message</div>
<svg class="ic" style="left:984.5px;top:524.00px;width:8.4px;height:8.6px" viewBox="0 0 9 10" preserveAspectRatio="none"><path d="M0 0 9 5 0 10z" fill="#000"/></svg>
<div class="r" style="left:651.60px;top:550.00px;width:350.20px;height:25.00px;background:#f1f5f9;border-radius:5px;"></div>
<div class="t m" style="left:659.46px;top:558.50px;font-size:9.15px;line-height:9.15px;">2. notifications/message</div>
<svg class="ic" style="left:984.5px;top:558.00px;width:8.4px;height:8.6px" viewBox="0 0 9 10" preserveAspectRatio="none"><path d="M0 0 9 5 0 10z" fill="#000"/></svg>
<div class="r" style="left:651.60px;top:584.00px;width:350.20px;height:120.00px;background:#f1f5f9;border-radius:5px;"></div>
<div class="t m" style="left:659.46px;top:592.91px;font-size:9.15px;line-height:9.15px;">1. notifications/message</div>
<svg class="ic" style="left:984px;top:593px;width:9.2px;height:7.9px" viewBox="0 0 10 9" preserveAspectRatio="none"><path d="M0 0h10L5 9z" fill="#000"/></svg>
<div class="t s" style="left:658.96px;top:612.10px;font-size:10.27px;line-height:10.27px;font-weight:700;color:#9b45ee;transform:scaleX(0.9265);">Details:</div>
<div class="r" style="left:660.00px;top:627.20px;width:333.30px;height:80.00px;background:#fff;border:1px solid #eef1f5;border-radius:4px;box-sizing:border-box;"></div>
<svg class="ic" style="left:968.00px;top:640.00px;width:12.5px;height:12.5px;" viewBox="0 0 24 24" fill="none" stroke="#3b4250" stroke-width="2.1" stroke-linecap="round" stroke-linejoin="round"><rect width="14" height="14" x="8" y="8" rx="2" ry="2"/><path d="M4 16c-1.1 0-2-.9-2-2V4c0-1.1.9-2 2-2h10c1.1 0 2 .9 2 2"/></svg>
<div class="t m" style="left:671.61px;top:642.01px;font-size:9.36px;line-height:9.36px;color:#6b7280;transform:scaleX(0.9615);">{</div>
<div class="t m" style="left:689.35px;top:658.72px;font-size:9.36px;line-height:9.36px;color:#4b5563;transform:scaleX(0.9615);">method:</div>
<div class="t m" style="left:730.59px;top:658.72px;font-size:9.36px;line-height:9.36px;color:#16a34a;transform:scaleX(0.9615);">"notifications/message"</div>
<div class="t m" style="left:689.04px;top:678.10px;font-size:9.36px;line-height:9.36px;color:#4b5563;transform:scaleX(0.9615);">params:</div>
<div class="t m" style="left:730.11px;top:678.10px;font-size:9.36px;line-height:9.36px;color:#6b7280;transform:scaleX(0.9615);">{</div>
<div class="t m" style="left:706.73px;top:696.22px;font-size:9.36px;line-height:9.36px;color:#4b5563;transform:scaleX(0.9615);">level:</div>
<div class="t m" style="left:742.89px;top:696.22px;font-size:9.36px;line-height:9.36px;color:#16a34a;transform:scaleX(0.9615);">"info"</div>
<div class="r" style="left:683.50px;top:653.00px;width:1.00px;height:50.00px;background:#e5e7eb;"></div>
<div class="r" style="left:701.70px;top:690.00px;width:1.00px;height:15.00px;background:#e5e7eb;"></div>
<div class="r" style="left:0.00px;top:698.00px;width:1024.00px;height:1.00px;background:#c9c9c9;"></div>
<div class="r" style="left:20.00px;top:698.00px;width:56.00px;height:1.00px;background:repeating-linear-gradient(90deg,#555 0 2px,#9a9a9a 2px 4px,#c9c9c9 4px 6px);"></div>
</body></html>
